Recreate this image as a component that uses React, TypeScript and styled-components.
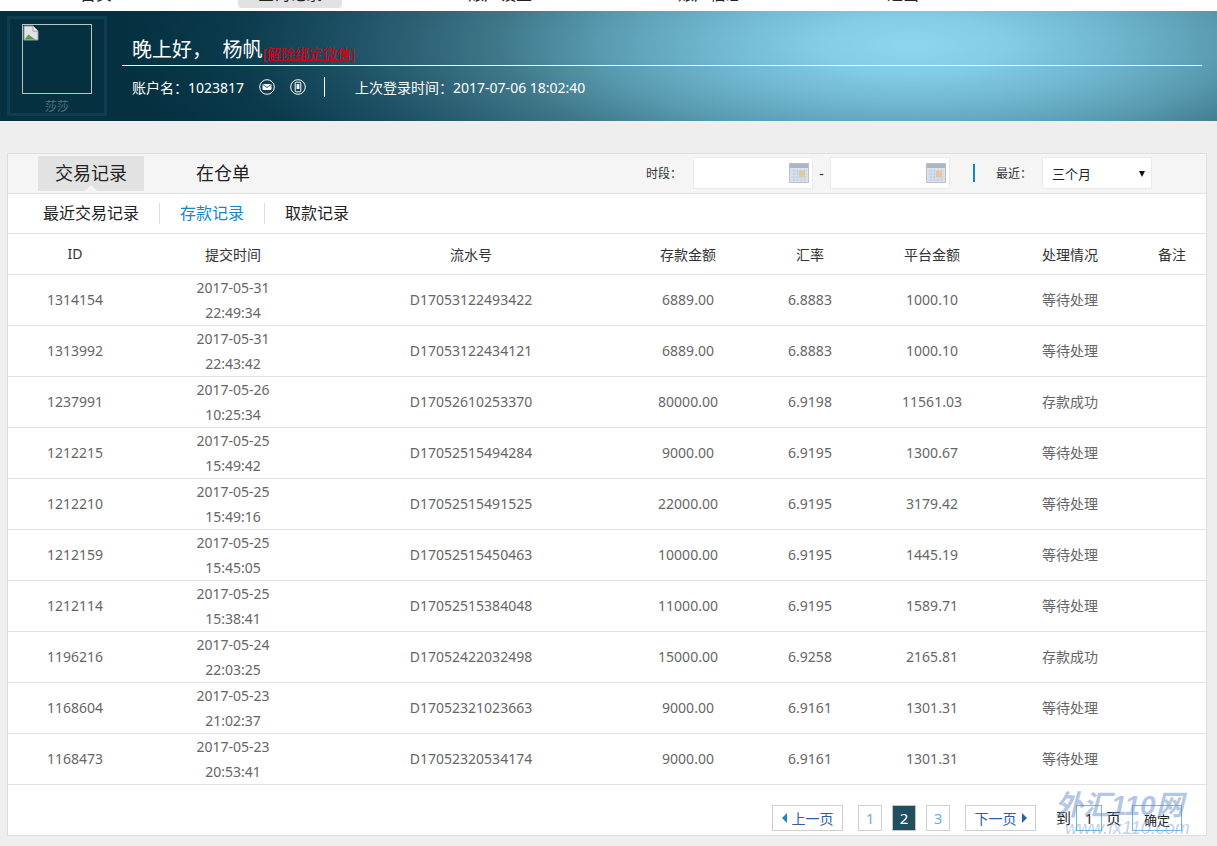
import React from "react";
import styled, { createGlobalStyle } from "styled-components";

const GlobalStyle = createGlobalStyle`
  html, body {
    margin: 0;
    padding: 0;
    background: #eeeeee;
    height: 846px;
    overflow: hidden;
    font-family: "Noto Sans", "Noto Sans CJK SC", sans-serif;
  }
  * { box-sizing: border-box; }
`;

const TopNav = styled.div`
  height: 11px;
  background: #fff;
  overflow: hidden;
  display: flex;
  padding-left: 7px;
`;

const NavItem = styled.div<{ $w: number }>`
  width: ${(p) => p.$w}px;
  flex: none;
  height: 26px;
  margin-top: -18px;
  text-align: center;
  font-size: 16px;
  line-height: 24px;
  color: #222;
`;

const NavPill = styled.span`
  display: inline-block;
  width: 104px;
  height: 26px;
  border-radius: 4px;
  background: #e2e2e2;
`;

const Banner = styled.div`
  height: 110px;
  display: flex;
  padding: 5px 15px 0 7px;
  background: radial-gradient(
    ellipse 800px 240px at 912px 34px,
    #8cd6f0 0%,
    #82cce6 12%,
    #70b6d0 25%,
    #5a9db2 38%,
    #3f7789 52%,
    #1f5266 70%,
    #0a3a4c 85%,
    #04303f 100%
  );
`;

const AvatarFrame = styled.div`
  width: 100px;
  height: 100px;
  flex: none;
  border: 3px solid #0d3d4f;
  padding: 5px 12px 0;
  text-align: center;
`;

const AvatarBox = styled.div`
  width: 70px;
  height: 70px;
  border: 1px solid #b7c5cb;
  text-align: left;
  svg { display: block; }
`;

const AvatarName = styled.div`
  margin-top: 5px;
  font-size: 12px;
  line-height: 16px;
  color: #4d7080;
`;

const Welcome = styled.div`
  flex: 1;
  margin-left: 15px;
`;

const Greeting = styled.div`
  height: 50px;
  padding: 19px 0 0 10px;
  border-bottom: 1px solid #fff;
  font-size: 20px;
  line-height: 30px;
  color: #fff;
  display: flex;
  align-items: flex-start;
  white-space: pre;
`;

const Unbind = styled.span`
  font-size: 14px;
  line-height: 20px;
  margin-top: 9px;
  color: #c00b1c;
  font-weight: 500;
  text-decoration: underline;
`;

const InfoRow = styled.div`
  display: flex;
  align-items: center;
  padding: 2px 0 0 10px;
  height: 40px;
  font-size: 14px;
  color: #fff;
`;

const Round = styled.svg`
  width: 16px;
  height: 16px;
  margin-left: 15px;
`;

const Divider = styled.span`
  width: 1px;
  height: 20px;
  background: #fff;
  margin: 0 30px 0 18px;
`;

const Panel = styled.div`
  position: relative;
  width: 1200px;
  height: 683px;
  margin: 32px 0 0 7px;
  background: #fff;
  border: 1px solid #dedede;
`;

const TabBar = styled.div`
  height: 40px;
  display: flex;
  align-items: flex-start;
  background: #f5f5f5;
  border-bottom: 1px solid #e2e2e2;
  padding: 2px 0 0 30px;
`;

const Tab = styled.div<{ $active?: boolean }>`
  position: relative;
  width: 106px;
  height: 35px;
  margin-right: 26px;
  text-align: center;
  font-size: 18px;
  line-height: 35px;
  color: #222;
  background: ${(p) => (p.$active ? "#e2e2e2" : "transparent")};
  ${(p) =>
    p.$active &&
    `&::after {
      content: "";
      position: absolute;
      left: 47px;
      bottom: 0;
      border: 6px solid transparent;
      border-top: 0;
      border-bottom-color: #f5f5f5;
    }`}
`;

const Filters = styled.div`
  margin-left: auto;
  display: flex;
  align-items: center;
  height: 32px;
  margin-top: 1px;
  padding-right: 54px;
  font-size: 12px;
  color: #333;
`;

const DateBox = styled.div`
  width: 120px;
  height: 32px;
  background: #fff;
  border: 1px solid #ebebeb;
  display: flex;
  align-items: center;
  justify-content: flex-end;
  padding-right: 3px;
`;

const Dash = styled.span`
  width: 17px;
  text-align: center;
  font-size: 14px;
`;

const FilterLabel = styled.span<{ $gap: number }>`
  margin-right: ${(p) => p.$gap}px;
`;

const BlueBar = styled.span`
  width: 2px;
  height: 18px;
  background: #1484c4;
  margin: 0 21px 0 23px;
`;

const SelectBox = styled.div`
  position: relative;
  width: 110px;
  height: 32px;
  padding-left: 9px;
  background: #fff;
  border: 1px solid #ebebeb;
  font-size: 13px;
  line-height: 32px;
  color: #222;
  &::after {
    content: "";
    position: absolute;
    right: 6px;
    top: 13px;
    border: 3.5px solid transparent;
    border-bottom: 0;
    border-top: 6px solid #111;
  }
`;

const SubNav = styled.div`
  height: 40px;
  display: flex;
  align-items: center;
  border-bottom: 1px solid #e2e2e2;
`;

const SubItem = styled.div<{ $active?: boolean; $first?: boolean }>`
  height: 21px;
  line-height: 21px;
  padding: 0 20px;
  margin-left: ${(p) => (p.$first ? "15px" : "0")};
  font-size: 16px;
  color: ${(p) => (p.$active ? "#1586c6" : "#222")};
  border-left: ${(p) => (p.$first ? "0" : "1px solid #dcdcdc")};
`;

const Table = styled.table`
  width: 1198px;
  table-layout: fixed;
  border-collapse: collapse;
`;

const HeadCell = styled.th`
  height: 40px;
  padding: 0;
  font-size: 14px;
  font-weight: 400;
  color: #333;
  text-align: center;
  border-bottom: 1px solid #e2e2e2;
`;

const Cell = styled.td`
  height: 51px;
  padding: 0;
  font-size: 14px;
  line-height: 25px;
  color: #666;
  text-align: center;
  border-bottom: 1px solid #e2e2e2;
`;

const Pager = styled.div`
  display: flex;
  align-items: center;
  height: 48px;
  padding: 18px 0 0 764px;
  font-size: 14px;
`;

const PageBox = styled.div<{ $current?: boolean }>`
  width: 24px;
  height: 26px;
  margin-right: 10px;
  border: 1px solid ${(p) => (p.$current ? "#c4c4c4" : "#cfcfcf")};
  background: ${(p) => (p.$current ? "#204f60" : "#fff")};
  color: ${(p) => (p.$current ? "#fff" : "#66b2e8")};
  text-align: center;
  line-height: 25px;
  font-size: 15px;
`;

const StepButton = styled.div<{ $ml: number; $mr: number }>`
  width: 71px;
  height: 26px;
  margin-left: ${(p) => p.$ml}px;
  margin-right: ${(p) => p.$mr}px;
  border: 1px solid #cfcfcf;
  display: flex;
  align-items: center;
  justify-content: center;
  gap: 5px;
  color: #2d5ea8;
  font-size: 14px;
`;

const Arrow = styled.span<{ $dir: "left" | "right" }>`
  width: 0;
  height: 0;
  border: 5px solid transparent;
  ${(p) =>
    p.$dir === "left"
      ? "border-left: 0; border-right: 5px solid #1c86c8;"
      : "border-right: 0; border-left: 5px solid #2d5ea8;"}
`;

const PagerText = styled.span<{ $ml: number }>`
  margin-left: ${(p) => p.$ml}px;
  width: 16px;
  font-size: 15px;
  color: #222;
`;

const PagerInput = styled.div`
  width: 26px;
  height: 26px;
  margin-left: 4px;
  border: 1px solid #6db9e6;
  text-align: center;
  line-height: 25px;
  font-size: 14px;
  color: #222;
`;

const ConfirmButton = styled.div`
  width: 50px;
  height: 26px;
  margin-left: 10px;
  border: 1px solid #6db9e6;
  text-align: center;
  line-height: 28px;
  font-size: 13px;
  color: #222;
`;

const Watermark = styled.div`
  position: absolute;
  left: 1047px;
  top: 637px;
  width: 150px;
  font-family: "Liberation Sans", "Noto Sans CJK SC", sans-serif;
  font-style: italic;
  pointer-events: none;
`;

const MarkTitle = styled.div`
  font-size: 28px;
  line-height: 30px;
  font-weight: 700;
  color: rgba(104, 142, 204, 0.5);
  white-space: nowrap;
`;

const MarkUrl = styled.div`
  font-size: 18px;
  line-height: 15px;
  margin-left: 10px;
  color: rgba(104, 142, 204, 0.42);
  white-space: nowrap;
`;

const Calendar = () => (
  <svg width="20" height="20" viewBox="0 0 20 20">
    <rect x="0.5" y="0.5" width="19" height="19" fill="#dbe3ef" stroke="#bcbfc4" />
    <rect x="1" y="1" width="18" height="4" fill="#aeb6c3" />
    <path d="M2 8h16M2 11h16M2 14h16M2 17h16M5 6v12M8.5 6v12M12 6v12M15.5 6v12" stroke="#bccbe2" strokeWidth="0.8" />
    <rect x="10" y="8" width="6" height="6" fill="#e7c79a" />
  </svg>
);

const rows = [
  ["1314154", "2017-05-31", "22:49:34", "D17053122493422", "6889.00", "6.8883", "1000.10", "等待处理"],
  ["1313992", "2017-05-31", "22:43:42", "D17053122434121", "6889.00", "6.8883", "1000.10", "等待处理"],
  ["1237991", "2017-05-26", "10:25:34", "D17052610253370", "80000.00", "6.9198", "11561.03", "存款成功"],
  ["1212215", "2017-05-25", "15:49:42", "D17052515494284", "9000.00", "6.9195", "1300.67", "等待处理"],
  ["1212210", "2017-05-25", "15:49:16", "D17052515491525", "22000.00", "6.9195", "3179.42", "等待处理"],
  ["1212159", "2017-05-25", "15:45:05", "D17052515450463", "10000.00", "6.9195", "1445.19", "等待处理"],
  ["1212114", "2017-05-25", "15:38:41", "D17052515384048", "11000.00", "6.9195", "1589.71", "等待处理"],
  ["1196216", "2017-05-24", "22:03:25", "D17052422032498", "15000.00", "6.9258", "2165.81", "存款成功"],
  ["1168604", "2017-05-23", "21:02:37", "D17052321023663", "9000.00", "6.9161", "1301.31", "等待处理"],
  ["1168473", "2017-05-23", "20:53:41", "D17052320534174", "9000.00", "6.9161", "1301.31", "等待处理"],
];

const columns = [134, 182, 294, 140, 104, 140, 136, 68];
const headers = ["ID", "提交时间", "流水号", "存款金额", "汇率", "平台金额", "处理情况", "备注"];
const navItems: [string, number][] = [
  ["首页", 178],
  ["查询记录", 210],
  ["账户设置", 210],
  ["账户信息", 210],
  ["退出", 176],
];

export default function App() {
  return (
    <>
      <GlobalStyle />
      <TopNav>
        {navItems.map(([n, w], i) => (
          <NavItem key={n} $w={w}>
            {i === 1 ? <NavPill>{n}</NavPill> : n}
          </NavItem>
        ))}
      </TopNav>
      <Banner>
        <AvatarFrame>
          <AvatarBox>
            <svg width="16" height="16" viewBox="0 0 16 16">
              <path d="M1 1h9l5 5v9H1z" fill="#dfe3e8" stroke="#9a9a9a" />
              <path d="M1.5 14.5l4-5 4 3 3 2z" fill="#5c9e4a" />
              <path d="M10 1v5h5" fill="#fff" stroke="#9a9a9a" />
            </svg>
          </AvatarBox>
          <AvatarName>莎莎</AvatarName>
        </AvatarFrame>
        <Welcome>
          <Greeting>
            晚上好，  杨帆<Unbind>[解除绑定微信]</Unbind>
          </Greeting>
          <InfoRow>
            账户名：1023817
            <Round viewBox="0 0 16 16" fill="none" stroke="#fff">
              <circle cx="8" cy="8" r="7.3" />
              <rect x="3.5" y="5" width="9" height="6" rx="1" fill="#fff" stroke="none" />
              <path d="M3.8 5.4L8 8.6l4.2-3.2" stroke="#0a3a4b" strokeWidth="0.8" />
            </Round>
            <Round viewBox="0 0 16 16" fill="none" stroke="#fff">
              <circle cx="8" cy="8" r="7.3" />
              <rect x="5.2" y="3.2" width="5.6" height="9.6" rx="1" />
              <rect x="6.6" y="5" width="2.8" height="5" fill="#fff" stroke="none" />
            </Round>
            <Divider />
            上次登录时间：2017-07-06 18:02:40
          </InfoRow>
        </Welcome>
      </Banner>
      <Panel>
        <TabBar>
          <Tab $active>交易记录</Tab>
          <Tab>在仓单</Tab>
          <Filters>
            <FilterLabel $gap={11}>时段：</FilterLabel>
            <DateBox>
              <Calendar />
            </DateBox>
            <Dash>-</Dash>
            <DateBox>
              <Calendar />
            </DateBox>
            <BlueBar />
            <FilterLabel $gap={10}>最近：</FilterLabel>
            <SelectBox>三个月</SelectBox>
          </Filters>
        </TabBar>
        <SubNav>
          <SubItem $first>最近交易记录</SubItem>
          <SubItem $active>存款记录</SubItem>
          <SubItem>取款记录</SubItem>
        </SubNav>
        <Table>
          <colgroup>
            {columns.map((w, i) => (
              <col key={i} width={w} />
            ))}
          </colgroup>
          <thead>
            <tr>
              {headers.map((h) => (
                <HeadCell key={h}>{h}</HeadCell>
              ))}
            </tr>
          </thead>
          <tbody>
            {rows.map((r) => (
              <tr key={r[0]}>
                <Cell>{r[0]}</Cell>
                <Cell>
                  {r[1]}
                  <br />
                  {r[2]}
                </Cell>
                <Cell>{r[3]}</Cell>
                <Cell>{r[4]}</Cell>
                <Cell>{r[5]}</Cell>
                <Cell>{r[6]}</Cell>
                <Cell>{r[7]}</Cell>
                <Cell />
              </tr>
            ))}
          </tbody>
        </Table>
        <Pager>
          <StepButton $ml={0} $mr={15}>
            <Arrow $dir="left" />
            上一页
          </StepButton>
          <PageBox>1</PageBox>
          <PageBox $current>2</PageBox>
          <PageBox>3</PageBox>
          <StepButton $ml={5} $mr={0}>
            下一页
            <Arrow $dir="right" />
          </StepButton>
          <PagerText $ml={20}>到</PagerText>
          <PagerInput>1</PagerInput>
          <PagerText $ml={4}>页</PagerText>
          <ConfirmButton>确定</ConfirmButton>
        </Pager>
        <Watermark>
          <MarkTitle>外汇110网</MarkTitle>
          <MarkUrl>www.fx110.com</MarkUrl>
        </Watermark>
      </Panel>
    </>
  );
}
